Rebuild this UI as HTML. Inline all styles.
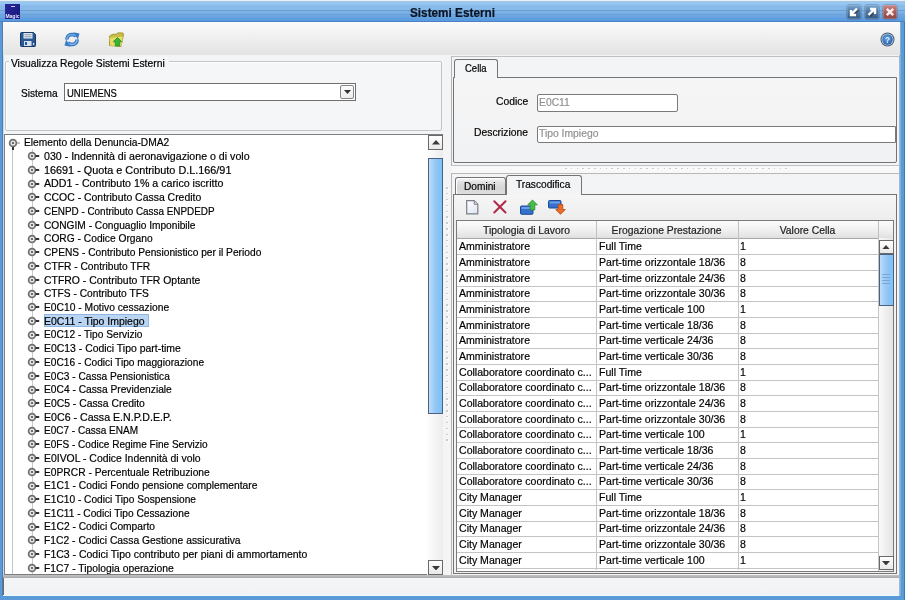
<!DOCTYPE html>
<html><head><meta charset="utf-8"><title>Sistemi Esterni</title><style>
*{box-sizing:border-box;margin:0;padding:0}
html,body{width:905px;height:600px;overflow:hidden;background:#5a9ad8}
body{position:relative;-webkit-text-stroke:0.2px;-webkit-font-smoothing:antialiased;will-change:transform;font-family:"Liberation Sans", sans-serif;font-size:11px;color:#000}
.a{position:absolute}
.t{position:absolute;white-space:nowrap;line-height:12px;transform:scaleX(.94);transform-origin:0 0}
.c{transform-origin:50% 0}
</style></head>
<body>
<div class="a" style="left:0;top:0;width:905px;height:22px;background:linear-gradient(#e2f2fb 0px,#e2f2fb 1px,#aac6de 1px,#aac6de 2px,#98c8f2 2px,#98c8f2 3px,#96c6f2 3px,#96c6f2 4px,#92c2f0 4px,#92c2f0 5px,#8ebff0 5px,#8ebff0 6px,#86b8e6 6px,#86b8e6 7px,#88bcea 7px,#88bcea 8px,#86bbea 8px,#86bbea 9px,#84b9e8 9px,#84b9e8 10px,#6f9fd0 10px,#6f9fd0 11px,#7cb2e6 11px,#7cb2e6 12px,#7ab0e6 12px,#7ab0e6 13px,#78aee4 13px,#78aee4 14px,#6ca0d6 14px,#6ca0d6 15px,#6ea8e2 15px,#6ea8e2 16px,#6aa5e1 16px,#6aa5e1 17px,#66a2e0 17px,#66a2e0 18px,#5e9de0 18px,#5e9de0 19px,#5c9ce0 19px,#5c9ce0 20px,#5a9adf 20px,#5a9adf 21px,#4a82c4 21px,#4a82c4 22px)"></div>
<div class="a" style="left:5px;top:4px;width:15px;height:15px;background:linear-gradient(135deg,#2a2a9a,#15157a)"></div>
<div class="a" style="left:11px;top:6px;width:4px;height:1px;background:#c8c8ff"></div>
<div class="a" style="left:5px;top:13.5px;width:15px;text-align:center;font-size:5px;line-height:5px;font-weight:bold;color:#e8e8ff;-webkit-text-stroke:0">Magic</div>
<div class="t c" style="left:0;width:905px;top:7px;text-align:center;font-weight:bold;font-size:12px;color:#0a1424;transform:scaleX(.98)">Sistemi Esterni</div>
<div class="a" style="left:847px;top:4.5px;width:14px;height:14px;border-radius:2px;background:linear-gradient(#7ba6cf,#4f7aa3 45%,#355c82);box-shadow:inset 0 0 0 1px rgba(255,255,255,.18),0 0 0 .5px rgba(40,70,110,.5)"><svg width="14" height="14" style="position:absolute;left:0;top:0"><path d="M10.5 4 L5 9.5" stroke="#223" stroke-width="2" opacity=".5" transform="translate(1,1)"/><path d="M10 3.5 L5 8.5 M4 5 V10 H9" stroke="#fff" stroke-width="2.4" fill="none"/></svg></div>
<div class="a" style="left:865px;top:4.5px;width:14px;height:14px;border-radius:2px;background:linear-gradient(#7ba6cf,#4f7aa3 45%,#355c82);box-shadow:inset 0 0 0 1px rgba(255,255,255,.18),0 0 0 .5px rgba(40,70,110,.5)"><svg width="14" height="14" style="position:absolute;left:0;top:0"><path d="M4 10.5 L9.5 5" stroke="#223" stroke-width="2" opacity=".5" transform="translate(1,1)"/><path d="M3.5 10 L8.5 5 M5 4 H10 V9" stroke="#fff" stroke-width="2.4" fill="none"/></svg></div>
<div class="a" style="left:883px;top:4.5px;width:14px;height:14px;border-radius:2px;background:linear-gradient(#c98a88,#a86060 45%,#8a4646);box-shadow:inset 0 0 0 1px rgba(255,255,255,.18),0 0 0 .5px rgba(40,70,110,.5)"><svg width="14" height="14" style="position:absolute;left:0;top:0"><path d="M3.8 3.8 L10.2 10.2 M10.2 3.8 L3.8 10.2" stroke="#fbeaea" stroke-width="2.4" fill="none"/></svg></div>
<div class="a" style="left:3px;top:22px;width:896px;height:573px;background:#f3f4f5"></div>
<div class="a" style="left:2px;top:22px;width:1px;height:574px;background:#4e7eae"></div>
<div class="a" style="left:3px;top:22px;width:1px;height:574px;background:#c4daee"></div>
<div class="a" style="left:899px;top:22px;width:2px;height:574px;background:linear-gradient(90deg,#a8c0d8,#78a8d8)"></div>
<div class="a" style="left:904px;top:22px;width:1px;height:578px;background:#3a78b0"></div>
<div class="a" style="left:3px;top:22px;width:897px;height:33px;background:linear-gradient(#fbfbfb,#f1f1f1 40%,#e3e3e3)"></div>
<svg class="a" style="left:20px;top:32px" width="16" height="15" viewBox="0 0 16 15">
<path d="M1.5 0.5 H13.5 L15.5 2.5 V13.5 Q15.5 14.5 14.5 14.5 H1.5 Q0.5 14.5 0.5 13.5 V1.5 Q0.5 0.5 1.5 0.5 Z" fill="#2a5894" stroke="#17396a"/>
<rect x="3.5" y="1" width="9" height="5.5" fill="#dfe6f0"/>
<rect x="4.5" y="2.2" width="7" height="1" fill="#8f9cb0"/>
<rect x="4.5" y="4.2" width="7" height="1" fill="#8f9cb0"/>
<rect x="4" y="9" width="7.5" height="5" fill="#d7e0ee"/>
<rect x="5" y="10" width="2" height="3" fill="#2a5894"/>
<rect x="13" y="11" width="1.2" height="2" fill="#d7e0ee"/>
</svg>
<svg class="a" style="left:64px;top:32px" width="16" height="15" viewBox="0 0 16 15">
<path d="M2.8 7.5 C2.8 3.8 6 2.2 9 2.6 C10.5 2.8 11.5 3.4 12.2 4.2" stroke="#2f6db8" stroke-width="3.6" fill="none"/>
<path d="M2.8 7.5 C2.8 3.8 6 2.2 9 2.6 C10.5 2.8 11.5 3.4 12.2 4.2" stroke="#6aaae8" stroke-width="1.6" fill="none"/>
<path d="M9.5 0.3 L15.5 1.5 L13.8 7.5 Z" fill="#3a7cc8"/>
<path d="M13.2 7.5 C13.2 11.2 10 12.8 7 12.4 C5.5 12.2 4.5 11.6 3.8 10.8" stroke="#2f6db8" stroke-width="3.6" fill="none"/>
<path d="M13.2 7.5 C13.2 11.2 10 12.8 7 12.4 C5.5 12.2 4.5 11.6 3.8 10.8" stroke="#7ab6ee" stroke-width="1.6" fill="none"/>
<path d="M6.5 14.7 L0.5 13.5 L2.2 7.5 Z" fill="#3a7cc8"/>
</svg>
<svg class="a" style="left:108px;top:32px" width="16" height="15" viewBox="0 0 16 15">
<path d="M1.5 4 L1.5 13.5 L13 14.5 L15.5 3 L15 1 L10 0.8 L8.5 2 L4 2.5 Z" fill="#c8bd48" stroke="#9a8e22" stroke-width=".8"/>
<path d="M1.5 6 L14.8 4.5 L13.5 14 L2.5 13.8 Z" fill="#e6dc68"/>
<path d="M9.5 5.5 L13.8 9.8 L11.7 9.8 L11.7 14 L7.3 14 L7.3 9.8 L5.2 9.8 Z" fill="#36b436" stroke="#1f8a1f" stroke-width=".7"/>
</svg>
<svg class="a" style="left:880px;top:31.5px" width="15" height="15" viewBox="0 0 15 15">
<defs><radialGradient id="hg" cx=".45" cy=".4" r=".6"><stop offset="0" stop-color="#6aa6e4"/><stop offset="1" stop-color="#2c64a8"/></radialGradient></defs>
<circle cx="7.5" cy="7.5" r="7" fill="#4a5c74"/>
<circle cx="7.5" cy="7.5" r="6" fill="#b8d0e8"/>
<circle cx="7.5" cy="7.5" r="5.2" fill="url(#hg)"/>
<text x="7.5" y="10.8" text-anchor="middle" font-family="Liberation Sans" font-weight="bold" font-size="8.5" fill="#d8ecff" style="-webkit-text-stroke:0">?</text>
</svg>
<div class="a" style="left:5px;top:61px;width:437px;height:70px;border:1px solid #c2c4c6;border-radius:2px;background:#f5f6f7;box-shadow:inset 1px 1px 0 #fff"></div>
<div class="t" style="left:9px;top:56.5px;padding:0 4px 0 2px;background:#f5f6f7;color:#000">Visualizza Regole Sistemi Esterni</div>
<div class="t" style="left:21px;top:86.5px;transform:scaleX(.92)">Sistema</div>
<div class="a" style="left:64px;top:83px;width:292px;height:18px;border:1px solid #6f6f6f;background:#fff"></div>
<div class="t" style="left:66.5px;top:86.5px;transform:scaleX(.86)">UNIEMENS</div>
<div class="a" style="left:340px;top:85px;width:14px;height:14px;border:1px solid #858585;border-radius:2px;background:linear-gradient(#fdfdfd,#ececec)"></div>
<svg class="a" style="left:343.5px;top:89.5px" width="7" height="4"><path d="M0 0 H7 L3.5 4 Z" fill="#333"/></svg>
<div class="a" style="left:4px;top:134px;width:439px;height:441px;border:1px solid #7d7d7d;border-right:none;background:#fff"></div>
<div class="a" style="left:12px;top:146px;width:1px;height:428px;background:#c0c6ca"></div>
<div class="a" style="left:12px;top:146px;width:2px;height:4px;background:#333"></div>
<div class="a" style="left:31.5px;top:149px;width:1px;height:425px;background:#c8cccf"></div>
<svg class="a" style="left:7.5px;top:137.6px" width="14" height="10" viewBox="0 0 14 10"><circle cx="5" cy="5" r="3.4" fill="#e6e6e6" stroke="#6e6e6e" stroke-width="1.7"/><circle cx="5" cy="5" r="1.1" fill="#505050"/><rect x="8.6" y="4.5" width="3.4" height="1" fill="#8a8a8a"/></svg>
<div class="t" style="left:24px;top:136.30px;transform:scaleX(0.9278)">Elemento della Denuncia-DMA2</div>
<svg class="a" style="left:27px;top:151.32px" width="14" height="10" viewBox="0 0 14 10"><circle cx="5" cy="5" r="3.4" fill="#e6e6e6" stroke="#6e6e6e" stroke-width="1.7"/><circle cx="5" cy="5" r="1.1" fill="#505050"/><rect x="8.6" y="4.1" width="3.6" height="1.8" fill="#1e1e1e"/></svg>
<div class="t" style="left:44px;top:150.02px;transform:scaleX(0.966)">030 - Indennità di aeronavigazione o di volo</div>
<svg class="a" style="left:27px;top:165.04px" width="14" height="10" viewBox="0 0 14 10"><circle cx="5" cy="5" r="3.4" fill="#e6e6e6" stroke="#6e6e6e" stroke-width="1.7"/><circle cx="5" cy="5" r="1.1" fill="#505050"/><rect x="8.6" y="4.1" width="3.6" height="1.8" fill="#1e1e1e"/></svg>
<div class="t" style="left:44px;top:163.74px;transform:scaleX(0.9854)">16691 - Quota e Contributo D.L.166/91</div>
<svg class="a" style="left:27px;top:178.76px" width="14" height="10" viewBox="0 0 14 10"><circle cx="5" cy="5" r="3.4" fill="#e6e6e6" stroke="#6e6e6e" stroke-width="1.7"/><circle cx="5" cy="5" r="1.1" fill="#505050"/><rect x="8.6" y="4.1" width="3.6" height="1.8" fill="#1e1e1e"/></svg>
<div class="t" style="left:44px;top:177.46px;transform:scaleX(0.9683)">ADD1 - Contributo 1% a carico iscritto</div>
<svg class="a" style="left:27px;top:192.48px" width="14" height="10" viewBox="0 0 14 10"><circle cx="5" cy="5" r="3.4" fill="#e6e6e6" stroke="#6e6e6e" stroke-width="1.7"/><circle cx="5" cy="5" r="1.1" fill="#505050"/><rect x="8.6" y="4.1" width="3.6" height="1.8" fill="#1e1e1e"/></svg>
<div class="t" style="left:44px;top:191.18px;transform:scaleX(0.9492)">CCOC - Contributo Cassa Credito</div>
<svg class="a" style="left:27px;top:206.2px" width="14" height="10" viewBox="0 0 14 10"><circle cx="5" cy="5" r="3.4" fill="#e6e6e6" stroke="#6e6e6e" stroke-width="1.7"/><circle cx="5" cy="5" r="1.1" fill="#505050"/><rect x="8.6" y="4.1" width="3.6" height="1.8" fill="#1e1e1e"/></svg>
<div class="t" style="left:44px;top:204.90px;transform:scaleX(0.9002)">CENPD - Contributo Cassa ENPDEDP</div>
<svg class="a" style="left:27px;top:219.92000000000002px" width="14" height="10" viewBox="0 0 14 10"><circle cx="5" cy="5" r="3.4" fill="#e6e6e6" stroke="#6e6e6e" stroke-width="1.7"/><circle cx="5" cy="5" r="1.1" fill="#505050"/><rect x="8.6" y="4.1" width="3.6" height="1.8" fill="#1e1e1e"/></svg>
<div class="t" style="left:44px;top:218.62px;transform:scaleX(0.9246)">CONGIM - Conguaglio Imponibile</div>
<svg class="a" style="left:27px;top:233.64px" width="14" height="10" viewBox="0 0 14 10"><circle cx="5" cy="5" r="3.4" fill="#e6e6e6" stroke="#6e6e6e" stroke-width="1.7"/><circle cx="5" cy="5" r="1.1" fill="#505050"/><rect x="8.6" y="4.1" width="3.6" height="1.8" fill="#1e1e1e"/></svg>
<div class="t" style="left:44px;top:232.34px;transform:scaleX(0.9304)">CORG - Codice Organo</div>
<svg class="a" style="left:27px;top:247.36px" width="14" height="10" viewBox="0 0 14 10"><circle cx="5" cy="5" r="3.4" fill="#e6e6e6" stroke="#6e6e6e" stroke-width="1.7"/><circle cx="5" cy="5" r="1.1" fill="#505050"/><rect x="8.6" y="4.1" width="3.6" height="1.8" fill="#1e1e1e"/></svg>
<div class="t" style="left:44px;top:246.06px;transform:scaleX(0.928)">CPENS - Contributo Pensionistico per il Periodo</div>
<svg class="a" style="left:27px;top:261.08px" width="14" height="10" viewBox="0 0 14 10"><circle cx="5" cy="5" r="3.4" fill="#e6e6e6" stroke="#6e6e6e" stroke-width="1.7"/><circle cx="5" cy="5" r="1.1" fill="#505050"/><rect x="8.6" y="4.1" width="3.6" height="1.8" fill="#1e1e1e"/></svg>
<div class="t" style="left:44px;top:259.78px;transform:scaleX(0.9311)">CTFR - Contributo TFR</div>
<svg class="a" style="left:27px;top:274.8px" width="14" height="10" viewBox="0 0 14 10"><circle cx="5" cy="5" r="3.4" fill="#e6e6e6" stroke="#6e6e6e" stroke-width="1.7"/><circle cx="5" cy="5" r="1.1" fill="#505050"/><rect x="8.6" y="4.1" width="3.6" height="1.8" fill="#1e1e1e"/></svg>
<div class="t" style="left:44px;top:273.50px;transform:scaleX(0.9485)">CTFRO - Contributo TFR Optante</div>
<svg class="a" style="left:27px;top:288.52px" width="14" height="10" viewBox="0 0 14 10"><circle cx="5" cy="5" r="3.4" fill="#e6e6e6" stroke="#6e6e6e" stroke-width="1.7"/><circle cx="5" cy="5" r="1.1" fill="#505050"/><rect x="8.6" y="4.1" width="3.6" height="1.8" fill="#1e1e1e"/></svg>
<div class="t" style="left:44px;top:287.22px;transform:scaleX(0.9275)">CTFS - Contributo TFS</div>
<svg class="a" style="left:27px;top:302.24px" width="14" height="10" viewBox="0 0 14 10"><circle cx="5" cy="5" r="3.4" fill="#e6e6e6" stroke="#6e6e6e" stroke-width="1.7"/><circle cx="5" cy="5" r="1.1" fill="#505050"/><rect x="8.6" y="4.1" width="3.6" height="1.8" fill="#1e1e1e"/></svg>
<div class="t" style="left:44px;top:300.94px;transform:scaleX(0.9347)">E0C10 - Motivo cessazione</div>
<svg class="a" style="left:27px;top:315.96000000000004px" width="14" height="10" viewBox="0 0 14 10"><circle cx="5" cy="5" r="3.4" fill="#e6e6e6" stroke="#6e6e6e" stroke-width="1.7"/><circle cx="5" cy="5" r="1.1" fill="#505050"/><rect x="8.6" y="4.1" width="3.6" height="1.8" fill="#1e1e1e"/></svg>
<div class="a" style="left:43.5px;top:313.76px;width:105px;height:13px;background:#b9d5f3;border:1px solid #8fb6e3"></div>
<div class="t" style="left:44px;top:314.66px;transform:scaleX(0.9525)">E0C11 - Tipo Impiego</div>
<svg class="a" style="left:27px;top:329.68px" width="14" height="10" viewBox="0 0 14 10"><circle cx="5" cy="5" r="3.4" fill="#e6e6e6" stroke="#6e6e6e" stroke-width="1.7"/><circle cx="5" cy="5" r="1.1" fill="#505050"/><rect x="8.6" y="4.1" width="3.6" height="1.8" fill="#1e1e1e"/></svg>
<div class="t" style="left:44px;top:328.38px;transform:scaleX(0.9258)">E0C12 - Tipo Servizio</div>
<svg class="a" style="left:27px;top:343.4px" width="14" height="10" viewBox="0 0 14 10"><circle cx="5" cy="5" r="3.4" fill="#e6e6e6" stroke="#6e6e6e" stroke-width="1.7"/><circle cx="5" cy="5" r="1.1" fill="#505050"/><rect x="8.6" y="4.1" width="3.6" height="1.8" fill="#1e1e1e"/></svg>
<div class="t" style="left:44px;top:342.10px;transform:scaleX(0.9484)">E0C13 - Codici Tipo part-time</div>
<svg class="a" style="left:27px;top:357.12px" width="14" height="10" viewBox="0 0 14 10"><circle cx="5" cy="5" r="3.4" fill="#e6e6e6" stroke="#6e6e6e" stroke-width="1.7"/><circle cx="5" cy="5" r="1.1" fill="#505050"/><rect x="8.6" y="4.1" width="3.6" height="1.8" fill="#1e1e1e"/></svg>
<div class="t" style="left:44px;top:355.82px;transform:scaleX(0.9249)">E0C16 - Codici Tipo maggiorazione</div>
<svg class="a" style="left:27px;top:370.84000000000003px" width="14" height="10" viewBox="0 0 14 10"><circle cx="5" cy="5" r="3.4" fill="#e6e6e6" stroke="#6e6e6e" stroke-width="1.7"/><circle cx="5" cy="5" r="1.1" fill="#505050"/><rect x="8.6" y="4.1" width="3.6" height="1.8" fill="#1e1e1e"/></svg>
<div class="t" style="left:44px;top:369.54px;transform:scaleX(0.923)">E0C3 - Cassa Pensionistica</div>
<svg class="a" style="left:27px;top:384.56px" width="14" height="10" viewBox="0 0 14 10"><circle cx="5" cy="5" r="3.4" fill="#e6e6e6" stroke="#6e6e6e" stroke-width="1.7"/><circle cx="5" cy="5" r="1.1" fill="#505050"/><rect x="8.6" y="4.1" width="3.6" height="1.8" fill="#1e1e1e"/></svg>
<div class="t" style="left:44px;top:383.26px;transform:scaleX(0.929)">E0C4 - Cassa Previdenziale</div>
<svg class="a" style="left:27px;top:398.28px" width="14" height="10" viewBox="0 0 14 10"><circle cx="5" cy="5" r="3.4" fill="#e6e6e6" stroke="#6e6e6e" stroke-width="1.7"/><circle cx="5" cy="5" r="1.1" fill="#505050"/><rect x="8.6" y="4.1" width="3.6" height="1.8" fill="#1e1e1e"/></svg>
<div class="t" style="left:44px;top:396.98px;transform:scaleX(0.9428)">E0C5 - Cassa Credito</div>
<svg class="a" style="left:27px;top:412.0px" width="14" height="10" viewBox="0 0 14 10"><circle cx="5" cy="5" r="3.4" fill="#e6e6e6" stroke="#6e6e6e" stroke-width="1.7"/><circle cx="5" cy="5" r="1.1" fill="#505050"/><rect x="8.6" y="4.1" width="3.6" height="1.8" fill="#1e1e1e"/></svg>
<div class="t" style="left:44px;top:410.70px;transform:scaleX(0.9647)">E0C6 - Cassa E.N.P.D.E.P.</div>
<svg class="a" style="left:27px;top:425.72px" width="14" height="10" viewBox="0 0 14 10"><circle cx="5" cy="5" r="3.4" fill="#e6e6e6" stroke="#6e6e6e" stroke-width="1.7"/><circle cx="5" cy="5" r="1.1" fill="#505050"/><rect x="8.6" y="4.1" width="3.6" height="1.8" fill="#1e1e1e"/></svg>
<div class="t" style="left:44px;top:424.42px;transform:scaleX(0.9103)">E0C7 - Cassa ENAM</div>
<svg class="a" style="left:27px;top:439.44000000000005px" width="14" height="10" viewBox="0 0 14 10"><circle cx="5" cy="5" r="3.4" fill="#e6e6e6" stroke="#6e6e6e" stroke-width="1.7"/><circle cx="5" cy="5" r="1.1" fill="#505050"/><rect x="8.6" y="4.1" width="3.6" height="1.8" fill="#1e1e1e"/></svg>
<div class="t" style="left:44px;top:438.14px;transform:scaleX(0.9135)">E0FS - Codice Regime Fine Servizio</div>
<svg class="a" style="left:27px;top:453.15999999999997px" width="14" height="10" viewBox="0 0 14 10"><circle cx="5" cy="5" r="3.4" fill="#e6e6e6" stroke="#6e6e6e" stroke-width="1.7"/><circle cx="5" cy="5" r="1.1" fill="#505050"/><rect x="8.6" y="4.1" width="3.6" height="1.8" fill="#1e1e1e"/></svg>
<div class="t" style="left:44px;top:451.86px;transform:scaleX(0.9473)">E0IVOL - Codice Indennità di volo</div>
<svg class="a" style="left:27px;top:466.88px" width="14" height="10" viewBox="0 0 14 10"><circle cx="5" cy="5" r="3.4" fill="#e6e6e6" stroke="#6e6e6e" stroke-width="1.7"/><circle cx="5" cy="5" r="1.1" fill="#505050"/><rect x="8.6" y="4.1" width="3.6" height="1.8" fill="#1e1e1e"/></svg>
<div class="t" style="left:44px;top:465.58px;transform:scaleX(0.9315)">E0PRCR - Percentuale Retribuzione</div>
<svg class="a" style="left:27px;top:480.6px" width="14" height="10" viewBox="0 0 14 10"><circle cx="5" cy="5" r="3.4" fill="#e6e6e6" stroke="#6e6e6e" stroke-width="1.7"/><circle cx="5" cy="5" r="1.1" fill="#505050"/><rect x="8.6" y="4.1" width="3.6" height="1.8" fill="#1e1e1e"/></svg>
<div class="t" style="left:44px;top:479.30px;transform:scaleX(0.9334)">E1C1 - Codici Fondo pensione complementare</div>
<svg class="a" style="left:27px;top:494.32000000000005px" width="14" height="10" viewBox="0 0 14 10"><circle cx="5" cy="5" r="3.4" fill="#e6e6e6" stroke="#6e6e6e" stroke-width="1.7"/><circle cx="5" cy="5" r="1.1" fill="#505050"/><rect x="8.6" y="4.1" width="3.6" height="1.8" fill="#1e1e1e"/></svg>
<div class="t" style="left:44px;top:493.02px;transform:scaleX(0.924)">E1C10 - Codici Tipo Sospensione</div>
<svg class="a" style="left:27px;top:508.03999999999996px" width="14" height="10" viewBox="0 0 14 10"><circle cx="5" cy="5" r="3.4" fill="#e6e6e6" stroke="#6e6e6e" stroke-width="1.7"/><circle cx="5" cy="5" r="1.1" fill="#505050"/><rect x="8.6" y="4.1" width="3.6" height="1.8" fill="#1e1e1e"/></svg>
<div class="t" style="left:44px;top:506.74px;transform:scaleX(0.924)">E1C11 - Codici Tipo Cessazione</div>
<svg class="a" style="left:27px;top:521.76px" width="14" height="10" viewBox="0 0 14 10"><circle cx="5" cy="5" r="3.4" fill="#e6e6e6" stroke="#6e6e6e" stroke-width="1.7"/><circle cx="5" cy="5" r="1.1" fill="#505050"/><rect x="8.6" y="4.1" width="3.6" height="1.8" fill="#1e1e1e"/></svg>
<div class="t" style="left:44px;top:520.46px;transform:scaleX(0.9307)">E1C2 - Codici Comparto</div>
<svg class="a" style="left:27px;top:535.48px" width="14" height="10" viewBox="0 0 14 10"><circle cx="5" cy="5" r="3.4" fill="#e6e6e6" stroke="#6e6e6e" stroke-width="1.7"/><circle cx="5" cy="5" r="1.1" fill="#505050"/><rect x="8.6" y="4.1" width="3.6" height="1.8" fill="#1e1e1e"/></svg>
<div class="t" style="left:44px;top:534.18px;transform:scaleX(0.9376)">F1C2 - Codici Cassa Gestione assicurativa</div>
<svg class="a" style="left:27px;top:549.2px" width="14" height="10" viewBox="0 0 14 10"><circle cx="5" cy="5" r="3.4" fill="#e6e6e6" stroke="#6e6e6e" stroke-width="1.7"/><circle cx="5" cy="5" r="1.1" fill="#505050"/><rect x="8.6" y="4.1" width="3.6" height="1.8" fill="#1e1e1e"/></svg>
<div class="t" style="left:44px;top:547.90px;transform:scaleX(0.9528)">F1C3 - Codici Tipo contributo per piani di ammortamento</div>
<svg class="a" style="left:27px;top:562.92px" width="14" height="10" viewBox="0 0 14 10"><circle cx="5" cy="5" r="3.4" fill="#e6e6e6" stroke="#6e6e6e" stroke-width="1.7"/><circle cx="5" cy="5" r="1.1" fill="#505050"/><rect x="8.6" y="4.1" width="3.6" height="1.8" fill="#1e1e1e"/></svg>
<div class="t" style="left:44px;top:561.62px;transform:scaleX(0.9393)">F1C7 - Tipologia operazione</div>
<div class="a" style="left:427px;top:135px;width:16px;height:440px;background:linear-gradient(90deg,#fdfdfd,#ececec)"></div>
<div class="a" style="left:428px;top:135px;width:15px;height:15px;border:1px solid #6a6a6a;background:linear-gradient(#fff,#e8e8e8)"></div>
<svg class="a" style="left:431.5px;top:140px" width="8" height="4.5"><path d="M0 4.5 H8 L4 0 Z" fill="#3a3a3a"/></svg>
<div class="a" style="left:427.5px;top:158px;width:15.5px;height:256px;border:1px solid #4d617e;background:linear-gradient(90deg,#bcdefb,#98c8f5 45%,#86c2f6 75%,#7cc4fa)"></div>
<div class="a" style="left:428px;top:560px;width:15px;height:15px;border:1px solid #6a6a6a;background:linear-gradient(#fff,#e8e8e8)"></div>
<svg class="a" style="left:431.5px;top:565.5px" width="8" height="4.5"><path d="M0 0 H8 L4 4.5 Z" fill="#3a3a3a"/></svg>
<div class="a" style="left:3px;top:574.5px;width:896px;height:3.3px;background:linear-gradient(#c4c4c4,#a8a8a8)"></div>
<div class="a" style="left:446px;top:187.0px;width:1.6px;height:1.6px;background:#c8ccd0;box-shadow:1px 1px 0 #fff"></div>
<div class="a" style="left:446px;top:192.9px;width:1.6px;height:1.6px;background:#c8ccd0;box-shadow:1px 1px 0 #fff"></div>
<div class="a" style="left:446px;top:198.7px;width:1.6px;height:1.6px;background:#c8ccd0;box-shadow:1px 1px 0 #fff"></div>
<div class="a" style="left:446px;top:204.6px;width:1.6px;height:1.6px;background:#c8ccd0;box-shadow:1px 1px 0 #fff"></div>
<div class="a" style="left:446px;top:210.5px;width:1.6px;height:1.6px;background:#c8ccd0;box-shadow:1px 1px 0 #fff"></div>
<div class="a" style="left:446px;top:216.3px;width:1.6px;height:1.6px;background:#c8ccd0;box-shadow:1px 1px 0 #fff"></div>
<div class="a" style="left:446px;top:222.2px;width:1.6px;height:1.6px;background:#c8ccd0;box-shadow:1px 1px 0 #fff"></div>
<div class="a" style="left:446px;top:228.1px;width:1.6px;height:1.6px;background:#c8ccd0;box-shadow:1px 1px 0 #fff"></div>
<div class="a" style="left:446px;top:234.0px;width:1.6px;height:1.6px;background:#c8ccd0;box-shadow:1px 1px 0 #fff"></div>
<div class="a" style="left:446px;top:239.8px;width:1.6px;height:1.6px;background:#c8ccd0;box-shadow:1px 1px 0 #fff"></div>
<div class="a" style="left:446px;top:245.7px;width:1.6px;height:1.6px;background:#c8ccd0;box-shadow:1px 1px 0 #fff"></div>
<div class="a" style="left:446px;top:251.6px;width:1.6px;height:1.6px;background:#c8ccd0;box-shadow:1px 1px 0 #fff"></div>
<div class="a" style="left:446px;top:257.4px;width:1.6px;height:1.6px;background:#c8ccd0;box-shadow:1px 1px 0 #fff"></div>
<div class="a" style="left:446px;top:263.3px;width:1.6px;height:1.6px;background:#c8ccd0;box-shadow:1px 1px 0 #fff"></div>
<div class="a" style="left:446px;top:269.2px;width:1.6px;height:1.6px;background:#c8ccd0;box-shadow:1px 1px 0 #fff"></div>
<div class="a" style="left:446px;top:275.1px;width:1.6px;height:1.6px;background:#c8ccd0;box-shadow:1px 1px 0 #fff"></div>
<div class="a" style="left:446px;top:280.9px;width:1.6px;height:1.6px;background:#c8ccd0;box-shadow:1px 1px 0 #fff"></div>
<div class="a" style="left:446px;top:286.8px;width:1.6px;height:1.6px;background:#c8ccd0;box-shadow:1px 1px 0 #fff"></div>
<div class="a" style="left:446px;top:292.7px;width:1.6px;height:1.6px;background:#c8ccd0;box-shadow:1px 1px 0 #fff"></div>
<div class="a" style="left:446px;top:298.5px;width:1.6px;height:1.6px;background:#c8ccd0;box-shadow:1px 1px 0 #fff"></div>
<div class="a" style="left:446px;top:304.4px;width:1.6px;height:1.6px;background:#c8ccd0;box-shadow:1px 1px 0 #fff"></div>
<div class="a" style="left:446px;top:310.3px;width:1.6px;height:1.6px;background:#c8ccd0;box-shadow:1px 1px 0 #fff"></div>
<div class="a" style="left:446px;top:316.1px;width:1.6px;height:1.6px;background:#c8ccd0;box-shadow:1px 1px 0 #fff"></div>
<div class="a" style="left:446px;top:322.0px;width:1.6px;height:1.6px;background:#c8ccd0;box-shadow:1px 1px 0 #fff"></div>
<div class="a" style="left:446px;top:327.9px;width:1.6px;height:1.6px;background:#c8ccd0;box-shadow:1px 1px 0 #fff"></div>
<div class="a" style="left:446px;top:333.8px;width:1.6px;height:1.6px;background:#c8ccd0;box-shadow:1px 1px 0 #fff"></div>
<div class="a" style="left:446px;top:339.6px;width:1.6px;height:1.6px;background:#c8ccd0;box-shadow:1px 1px 0 #fff"></div>
<div class="a" style="left:446px;top:345.5px;width:1.6px;height:1.6px;background:#c8ccd0;box-shadow:1px 1px 0 #fff"></div>
<div class="a" style="left:446px;top:351.4px;width:1.6px;height:1.6px;background:#c8ccd0;box-shadow:1px 1px 0 #fff"></div>
<div class="a" style="left:446px;top:357.2px;width:1.6px;height:1.6px;background:#c8ccd0;box-shadow:1px 1px 0 #fff"></div>
<div class="a" style="left:446px;top:363.1px;width:1.6px;height:1.6px;background:#c8ccd0;box-shadow:1px 1px 0 #fff"></div>
<div class="a" style="left:446px;top:369.0px;width:1.6px;height:1.6px;background:#c8ccd0;box-shadow:1px 1px 0 #fff"></div>
<div class="a" style="left:446px;top:374.8px;width:1.6px;height:1.6px;background:#c8ccd0;box-shadow:1px 1px 0 #fff"></div>
<div class="a" style="left:446px;top:380.7px;width:1.6px;height:1.6px;background:#c8ccd0;box-shadow:1px 1px 0 #fff"></div>
<div class="a" style="left:446px;top:386.6px;width:1.6px;height:1.6px;background:#c8ccd0;box-shadow:1px 1px 0 #fff"></div>
<div class="a" style="left:446px;top:392.5px;width:1.6px;height:1.6px;background:#c8ccd0;box-shadow:1px 1px 0 #fff"></div>
<div class="a" style="left:446px;top:398.3px;width:1.6px;height:1.6px;background:#c8ccd0;box-shadow:1px 1px 0 #fff"></div>
<div class="a" style="left:446px;top:404.2px;width:1.6px;height:1.6px;background:#c8ccd0;box-shadow:1px 1px 0 #fff"></div>
<div class="a" style="left:446px;top:410.1px;width:1.6px;height:1.6px;background:#c8ccd0;box-shadow:1px 1px 0 #fff"></div>
<div class="a" style="left:446px;top:415.9px;width:1.6px;height:1.6px;background:#c8ccd0;box-shadow:1px 1px 0 #fff"></div>
<div class="a" style="left:446px;top:421.8px;width:1.6px;height:1.6px;background:#c8ccd0;box-shadow:1px 1px 0 #fff"></div>
<div class="a" style="left:446px;top:427.7px;width:1.6px;height:1.6px;background:#c8ccd0;box-shadow:1px 1px 0 #fff"></div>
<div class="a" style="left:446px;top:433.5px;width:1.6px;height:1.6px;background:#c8ccd0;box-shadow:1px 1px 0 #fff"></div>
<div class="a" style="left:446px;top:439.4px;width:1.6px;height:1.6px;background:#c8ccd0;box-shadow:1px 1px 0 #fff"></div>
<div class="a" style="left:451px;top:56px;width:448px;height:110px;border-left:1px solid #b4b4b4;border-top:1px solid #c0c0c0;border-bottom:1px solid #c0c0c0"></div>
<div class="a" style="left:453px;top:76.5px;width:444px;height:86px;border:1px solid #747474;border-radius:0 0 2px 2px;background:linear-gradient(#f6f6f7,#f0f1f2)"></div>
<div class="a" style="left:454px;top:58.5px;width:44px;height:19px;border:1px solid #747474;border-bottom:none;border-radius:3px 3px 0 0;background:#f4f5f7"></div>
<div class="t" style="left:465px;top:62.3px;font-size:10.8px;transform:scaleX(.88)">Cella</div>
<div class="t" style="left:496px;top:95px">Codice</div>
<div class="a" style="left:536.5px;top:94px;width:141px;height:17.5px;border:1px solid #7a7a7a;border-radius:2px;background:#fff"></div>
<div class="t" style="left:539px;top:96px;color:#909090">E0C11</div>
<div class="t" style="left:474px;top:126px">Descrizione</div>
<div class="a" style="left:536.5px;top:125.5px;width:359px;height:17px;border:1px solid #7a7a7a;border-radius:2px 0 0 2px;background:#fff"></div>
<div class="t" style="left:539px;top:127px;color:#909090">Tipo Impiego</div>
<div class="a" style="left:452px;top:165.5px;width:447px;height:7px;background:#f8f8f8"></div>
<div class="a" style="left:565.0px;top:167.5px;width:1.6px;height:1.6px;background:#c8ccd0;box-shadow:1px 1px 0 #fff"></div>
<div class="a" style="left:570.8px;top:167.5px;width:1.6px;height:1.6px;background:#c8ccd0;box-shadow:1px 1px 0 #fff"></div>
<div class="a" style="left:576.6px;top:167.5px;width:1.6px;height:1.6px;background:#c8ccd0;box-shadow:1px 1px 0 #fff"></div>
<div class="a" style="left:582.4px;top:167.5px;width:1.6px;height:1.6px;background:#c8ccd0;box-shadow:1px 1px 0 #fff"></div>
<div class="a" style="left:588.2px;top:167.5px;width:1.6px;height:1.6px;background:#c8ccd0;box-shadow:1px 1px 0 #fff"></div>
<div class="a" style="left:594.0px;top:167.5px;width:1.6px;height:1.6px;background:#c8ccd0;box-shadow:1px 1px 0 #fff"></div>
<div class="a" style="left:599.8px;top:167.5px;width:1.6px;height:1.6px;background:#c8ccd0;box-shadow:1px 1px 0 #fff"></div>
<div class="a" style="left:605.6px;top:167.5px;width:1.6px;height:1.6px;background:#c8ccd0;box-shadow:1px 1px 0 #fff"></div>
<div class="a" style="left:611.4px;top:167.5px;width:1.6px;height:1.6px;background:#c8ccd0;box-shadow:1px 1px 0 #fff"></div>
<div class="a" style="left:617.2px;top:167.5px;width:1.6px;height:1.6px;background:#c8ccd0;box-shadow:1px 1px 0 #fff"></div>
<div class="a" style="left:623.0px;top:167.5px;width:1.6px;height:1.6px;background:#c8ccd0;box-shadow:1px 1px 0 #fff"></div>
<div class="a" style="left:628.8px;top:167.5px;width:1.6px;height:1.6px;background:#c8ccd0;box-shadow:1px 1px 0 #fff"></div>
<div class="a" style="left:634.6px;top:167.5px;width:1.6px;height:1.6px;background:#c8ccd0;box-shadow:1px 1px 0 #fff"></div>
<div class="a" style="left:640.4px;top:167.5px;width:1.6px;height:1.6px;background:#c8ccd0;box-shadow:1px 1px 0 #fff"></div>
<div class="a" style="left:646.2px;top:167.5px;width:1.6px;height:1.6px;background:#c8ccd0;box-shadow:1px 1px 0 #fff"></div>
<div class="a" style="left:652.0px;top:167.5px;width:1.6px;height:1.6px;background:#c8ccd0;box-shadow:1px 1px 0 #fff"></div>
<div class="a" style="left:657.8px;top:167.5px;width:1.6px;height:1.6px;background:#c8ccd0;box-shadow:1px 1px 0 #fff"></div>
<div class="a" style="left:663.6px;top:167.5px;width:1.6px;height:1.6px;background:#c8ccd0;box-shadow:1px 1px 0 #fff"></div>
<div class="a" style="left:669.4px;top:167.5px;width:1.6px;height:1.6px;background:#c8ccd0;box-shadow:1px 1px 0 #fff"></div>
<div class="a" style="left:675.2px;top:167.5px;width:1.6px;height:1.6px;background:#c8ccd0;box-shadow:1px 1px 0 #fff"></div>
<div class="a" style="left:681.0px;top:167.5px;width:1.6px;height:1.6px;background:#c8ccd0;box-shadow:1px 1px 0 #fff"></div>
<div class="a" style="left:686.8px;top:167.5px;width:1.6px;height:1.6px;background:#c8ccd0;box-shadow:1px 1px 0 #fff"></div>
<div class="a" style="left:692.6px;top:167.5px;width:1.6px;height:1.6px;background:#c8ccd0;box-shadow:1px 1px 0 #fff"></div>
<div class="a" style="left:698.4px;top:167.5px;width:1.6px;height:1.6px;background:#c8ccd0;box-shadow:1px 1px 0 #fff"></div>
<div class="a" style="left:704.2px;top:167.5px;width:1.6px;height:1.6px;background:#c8ccd0;box-shadow:1px 1px 0 #fff"></div>
<div class="a" style="left:710.0px;top:167.5px;width:1.6px;height:1.6px;background:#c8ccd0;box-shadow:1px 1px 0 #fff"></div>
<div class="a" style="left:715.8px;top:167.5px;width:1.6px;height:1.6px;background:#c8ccd0;box-shadow:1px 1px 0 #fff"></div>
<div class="a" style="left:721.6px;top:167.5px;width:1.6px;height:1.6px;background:#c8ccd0;box-shadow:1px 1px 0 #fff"></div>
<div class="a" style="left:727.4px;top:167.5px;width:1.6px;height:1.6px;background:#c8ccd0;box-shadow:1px 1px 0 #fff"></div>
<div class="a" style="left:733.2px;top:167.5px;width:1.6px;height:1.6px;background:#c8ccd0;box-shadow:1px 1px 0 #fff"></div>
<div class="a" style="left:739.0px;top:167.5px;width:1.6px;height:1.6px;background:#c8ccd0;box-shadow:1px 1px 0 #fff"></div>
<div class="a" style="left:744.8px;top:167.5px;width:1.6px;height:1.6px;background:#c8ccd0;box-shadow:1px 1px 0 #fff"></div>
<div class="a" style="left:750.6px;top:167.5px;width:1.6px;height:1.6px;background:#c8ccd0;box-shadow:1px 1px 0 #fff"></div>
<div class="a" style="left:756.4px;top:167.5px;width:1.6px;height:1.6px;background:#c8ccd0;box-shadow:1px 1px 0 #fff"></div>
<div class="a" style="left:762.2px;top:167.5px;width:1.6px;height:1.6px;background:#c8ccd0;box-shadow:1px 1px 0 #fff"></div>
<div class="a" style="left:768.0px;top:167.5px;width:1.6px;height:1.6px;background:#c8ccd0;box-shadow:1px 1px 0 #fff"></div>
<div class="a" style="left:773.8px;top:167.5px;width:1.6px;height:1.6px;background:#c8ccd0;box-shadow:1px 1px 0 #fff"></div>
<div class="a" style="left:779.6px;top:167.5px;width:1.6px;height:1.6px;background:#c8ccd0;box-shadow:1px 1px 0 #fff"></div>
<div class="a" style="left:785.4px;top:167.5px;width:1.6px;height:1.6px;background:#c8ccd0;box-shadow:1px 1px 0 #fff"></div>
<div class="a" style="left:451px;top:172.5px;width:448px;height:402px;border-left:1px solid #b4b4b4;border-top:1px solid #b8b8b8"></div>
<div class="a" style="left:453px;top:193.5px;width:444px;height:380px;border:1px solid #747474;background:linear-gradient(#f6f6f7,#ececed 28px,#f2f2f3 40px)"></div>
<div class="a" style="left:454.5px;top:176.5px;width:51px;height:17px;border:1px solid #747474;border-bottom:none;border-radius:3px 3px 0 0;background:linear-gradient(#fafafa,#e2e2e2 25%,#d6d6d6 60%,#dedede);box-shadow:inset 1px 1px 0 #fff"></div>
<div class="t" style="left:464px;top:180px;font-size:10.8px">Domini</div>
<div class="a" style="left:506px;top:175px;width:76px;height:20px;border:1px solid #747474;border-bottom:none;border-radius:3px 3px 0 0;background:#f3f4f6"></div>
<div class="t" style="left:516px;top:178px;font-size:10.8px">Trascodifica</div>
<svg class="a" style="left:466px;top:200px" width="13" height="15" viewBox="0 0 13 15">
<defs><linearGradient id="dg" x1="0" y1="0" x2="1" y2="1"><stop offset="0" stop-color="#ffffff"/><stop offset="1" stop-color="#dde4f0"/></linearGradient></defs>
<path d="M0.7 0.7 H8.2 L11.8 4.3 V13.8 H0.7 Z" fill="url(#dg)" stroke="#7a7e88" stroke-width="1.2"/>
<path d="M8.2 0.7 V4.3 H11.8" fill="#c8d0dc" stroke="#7a7e88" stroke-width=".9"/>
</svg>
<svg class="a" style="left:493px;top:200px" width="14" height="14" viewBox="0 0 14 14">
<path d="M1.3 1.3 L12.5 12.5 M12.5 1.3 L1.3 12.5" stroke="#b02a48" stroke-width="2" stroke-linecap="round"/>
</svg>
<svg class="a" style="left:520px;top:199px" width="18" height="16" viewBox="0 0 18 16">
<rect x="0.5" y="7" width="12.5" height="8.3" rx="1" fill="#3570cc" stroke="#1d4a98"/>
<rect x="1.5" y="8" width="10.5" height="2" fill="#6a9ee6"/>
<path d="M12.5 1 L17.3 5.8 L14.8 5.8 L14.8 11 L10.2 11 L10.2 5.8 L7.7 5.8 Z" fill="#48bc48" stroke="#2a8a2a" stroke-width=".8"/>
</svg>
<svg class="a" style="left:548px;top:200px" width="19" height="15" viewBox="0 0 19 15">
<rect x="0.5" y="0.5" width="12.5" height="7.5" rx="1" fill="#3570cc" stroke="#1d4a98"/>
<rect x="1.5" y="1.5" width="10.5" height="2" fill="#6a9ee6"/>
<path d="M12.5 14.3 L17.3 9.5 L14.8 9.5 L14.8 4.5 L10.2 4.5 L10.2 9.5 L7.7 9.5 Z" fill="#ee6a2a" stroke="#b84a10" stroke-width=".8"/>
</svg>
<div class="a" style="left:456px;top:220px;width:438px;height:352px;border:1px solid #7a7a7a;background:#fff"></div>
<div class="a" style="left:457px;top:221px;width:436px;height:18px;background:linear-gradient(#fdfdfd,#eeeeee 60%,#e0e0e0);border-bottom:1px solid #a8a8a8"></div>
<div class="a" style="left:596.3px;top:221px;width:1px;height:17px;background:#c0c0c0"></div>
<div class="a" style="left:737.6px;top:221px;width:1px;height:17px;background:#c0c0c0"></div>
<div class="a" style="left:878.0px;top:221px;width:1px;height:17px;background:#c0c0c0"></div>
<div class="t c" style="left:457px;width:139px;top:224px;text-align:center;color:#202020">Tipologia di Lavoro</div>
<div class="t c" style="left:596px;width:141px;top:224px;text-align:center;color:#202020">Erogazione Prestazione</div>
<div class="t c" style="left:737px;width:141px;top:224px;text-align:center;color:#202020">Valore Cella</div>
<div class="a" style="left:457px;top:254.30px;width:421px;height:1px;background:#c4c4c4"></div>
<div class="t" style="left:459px;top:240.30px;transform:scaleX(.96)">Amministratore</div>
<div class="t" style="left:599px;top:240.30px;transform:scaleX(.96)">Full Time</div>
<div class="t" style="left:740px;top:240.30px;transform:scaleX(.96)">1</div>
<div class="a" style="left:457px;top:269.97px;width:421px;height:1px;background:#c4c4c4"></div>
<div class="t" style="left:459px;top:255.97px;transform:scaleX(.96)">Amministratore</div>
<div class="t" style="left:599px;top:255.97px;transform:scaleX(.96)">Part-time orizzontale 18/36</div>
<div class="t" style="left:740px;top:255.97px;transform:scaleX(.96)">8</div>
<div class="a" style="left:457px;top:285.64px;width:421px;height:1px;background:#c4c4c4"></div>
<div class="t" style="left:459px;top:271.64px;transform:scaleX(.96)">Amministratore</div>
<div class="t" style="left:599px;top:271.64px;transform:scaleX(.96)">Part-time orizzontale 24/36</div>
<div class="t" style="left:740px;top:271.64px;transform:scaleX(.96)">8</div>
<div class="a" style="left:457px;top:301.31px;width:421px;height:1px;background:#c4c4c4"></div>
<div class="t" style="left:459px;top:287.31px;transform:scaleX(.96)">Amministratore</div>
<div class="t" style="left:599px;top:287.31px;transform:scaleX(.96)">Part-time orizzontale 30/36</div>
<div class="t" style="left:740px;top:287.31px;transform:scaleX(.96)">8</div>
<div class="a" style="left:457px;top:316.98px;width:421px;height:1px;background:#c4c4c4"></div>
<div class="t" style="left:459px;top:302.98px;transform:scaleX(.96)">Amministratore</div>
<div class="t" style="left:599px;top:302.98px;transform:scaleX(.96)">Part-time verticale 100</div>
<div class="t" style="left:740px;top:302.98px;transform:scaleX(.96)">1</div>
<div class="a" style="left:457px;top:332.65px;width:421px;height:1px;background:#c4c4c4"></div>
<div class="t" style="left:459px;top:318.65px;transform:scaleX(.96)">Amministratore</div>
<div class="t" style="left:599px;top:318.65px;transform:scaleX(.96)">Part-time verticale 18/36</div>
<div class="t" style="left:740px;top:318.65px;transform:scaleX(.96)">8</div>
<div class="a" style="left:457px;top:348.32px;width:421px;height:1px;background:#c4c4c4"></div>
<div class="t" style="left:459px;top:334.32px;transform:scaleX(.96)">Amministratore</div>
<div class="t" style="left:599px;top:334.32px;transform:scaleX(.96)">Part-time verticale 24/36</div>
<div class="t" style="left:740px;top:334.32px;transform:scaleX(.96)">8</div>
<div class="a" style="left:457px;top:363.99px;width:421px;height:1px;background:#c4c4c4"></div>
<div class="t" style="left:459px;top:349.99px;transform:scaleX(.96)">Amministratore</div>
<div class="t" style="left:599px;top:349.99px;transform:scaleX(.96)">Part-time verticale 30/36</div>
<div class="t" style="left:740px;top:349.99px;transform:scaleX(.96)">8</div>
<div class="a" style="left:457px;top:379.66px;width:421px;height:1px;background:#c4c4c4"></div>
<div class="t" style="left:459px;top:365.66px;transform:scaleX(.96)">Collaboratore coordinato c...</div>
<div class="t" style="left:599px;top:365.66px;transform:scaleX(.96)">Full Time</div>
<div class="t" style="left:740px;top:365.66px;transform:scaleX(.96)">1</div>
<div class="a" style="left:457px;top:395.33px;width:421px;height:1px;background:#c4c4c4"></div>
<div class="t" style="left:459px;top:381.33px;transform:scaleX(.96)">Collaboratore coordinato c...</div>
<div class="t" style="left:599px;top:381.33px;transform:scaleX(.96)">Part-time orizzontale 18/36</div>
<div class="t" style="left:740px;top:381.33px;transform:scaleX(.96)">8</div>
<div class="a" style="left:457px;top:411.00px;width:421px;height:1px;background:#c4c4c4"></div>
<div class="t" style="left:459px;top:397.00px;transform:scaleX(.96)">Collaboratore coordinato c...</div>
<div class="t" style="left:599px;top:397.00px;transform:scaleX(.96)">Part-time orizzontale 24/36</div>
<div class="t" style="left:740px;top:397.00px;transform:scaleX(.96)">8</div>
<div class="a" style="left:457px;top:426.67px;width:421px;height:1px;background:#c4c4c4"></div>
<div class="t" style="left:459px;top:412.67px;transform:scaleX(.96)">Collaboratore coordinato c...</div>
<div class="t" style="left:599px;top:412.67px;transform:scaleX(.96)">Part-time orizzontale 30/36</div>
<div class="t" style="left:740px;top:412.67px;transform:scaleX(.96)">8</div>
<div class="a" style="left:457px;top:442.34px;width:421px;height:1px;background:#c4c4c4"></div>
<div class="t" style="left:459px;top:428.34px;transform:scaleX(.96)">Collaboratore coordinato c...</div>
<div class="t" style="left:599px;top:428.34px;transform:scaleX(.96)">Part-time verticale 100</div>
<div class="t" style="left:740px;top:428.34px;transform:scaleX(.96)">1</div>
<div class="a" style="left:457px;top:458.01px;width:421px;height:1px;background:#c4c4c4"></div>
<div class="t" style="left:459px;top:444.01px;transform:scaleX(.96)">Collaboratore coordinato c...</div>
<div class="t" style="left:599px;top:444.01px;transform:scaleX(.96)">Part-time verticale 18/36</div>
<div class="t" style="left:740px;top:444.01px;transform:scaleX(.96)">8</div>
<div class="a" style="left:457px;top:473.68px;width:421px;height:1px;background:#c4c4c4"></div>
<div class="t" style="left:459px;top:459.68px;transform:scaleX(.96)">Collaboratore coordinato c...</div>
<div class="t" style="left:599px;top:459.68px;transform:scaleX(.96)">Part-time verticale 24/36</div>
<div class="t" style="left:740px;top:459.68px;transform:scaleX(.96)">8</div>
<div class="a" style="left:457px;top:489.35px;width:421px;height:1px;background:#c4c4c4"></div>
<div class="t" style="left:459px;top:475.35px;transform:scaleX(.96)">Collaboratore coordinato c...</div>
<div class="t" style="left:599px;top:475.35px;transform:scaleX(.96)">Part-time verticale 30/36</div>
<div class="t" style="left:740px;top:475.35px;transform:scaleX(.96)">8</div>
<div class="a" style="left:457px;top:505.02px;width:421px;height:1px;background:#c4c4c4"></div>
<div class="t" style="left:459px;top:491.02px;transform:scaleX(.96)">City Manager</div>
<div class="t" style="left:599px;top:491.02px;transform:scaleX(.96)">Full Time</div>
<div class="t" style="left:740px;top:491.02px;transform:scaleX(.96)">1</div>
<div class="a" style="left:457px;top:520.69px;width:421px;height:1px;background:#c4c4c4"></div>
<div class="t" style="left:459px;top:506.69px;transform:scaleX(.96)">City Manager</div>
<div class="t" style="left:599px;top:506.69px;transform:scaleX(.96)">Part-time orizzontale 18/36</div>
<div class="t" style="left:740px;top:506.69px;transform:scaleX(.96)">8</div>
<div class="a" style="left:457px;top:536.36px;width:421px;height:1px;background:#c4c4c4"></div>
<div class="t" style="left:459px;top:522.36px;transform:scaleX(.96)">City Manager</div>
<div class="t" style="left:599px;top:522.36px;transform:scaleX(.96)">Part-time orizzontale 24/36</div>
<div class="t" style="left:740px;top:522.36px;transform:scaleX(.96)">8</div>
<div class="a" style="left:457px;top:552.03px;width:421px;height:1px;background:#c4c4c4"></div>
<div class="t" style="left:459px;top:538.03px;transform:scaleX(.96)">City Manager</div>
<div class="t" style="left:599px;top:538.03px;transform:scaleX(.96)">Part-time orizzontale 30/36</div>
<div class="t" style="left:740px;top:538.03px;transform:scaleX(.96)">8</div>
<div class="a" style="left:457px;top:567.70px;width:421px;height:1px;background:#c4c4c4"></div>
<div class="t" style="left:459px;top:553.70px;transform:scaleX(.96)">City Manager</div>
<div class="t" style="left:599px;top:553.70px;transform:scaleX(.96)">Part-time verticale 100</div>
<div class="t" style="left:740px;top:553.70px;transform:scaleX(.96)">1</div>
<div class="a" style="left:596.3px;top:238px;width:1px;height:332px;background:#c4c4c4"></div>
<div class="a" style="left:737.6px;top:238px;width:1px;height:332px;background:#c4c4c4"></div>
<div class="a" style="left:878px;top:238px;width:15px;height:333px;background:linear-gradient(90deg,#fafafa,#e4e4e4);border-left:1px solid #c4c4c4"></div>
<div class="a" style="left:878.5px;top:239.5px;width:15px;height:14.5px;border:1px solid #6a6a6a;background:linear-gradient(#fff,#e8e8e8)"></div>
<svg class="a" style="left:882px;top:244.5px" width="8" height="4.5"><path d="M0 4.5 H8 L4 0 Z" fill="#3a3a3a"/></svg>
<div class="a" style="left:878.5px;top:253.7px;width:15px;height:52px;border:1px solid #4d617e;background:linear-gradient(90deg,#bcdefb,#98c8f5 45%,#86c2f6 75%,#7cc4fa)"></div>
<div class="a" style="left:882px;top:274px;width:8px;height:1px;background:#7ea6d2"></div>
<div class="a" style="left:882px;top:277px;width:8px;height:1px;background:#7ea6d2"></div>
<div class="a" style="left:882px;top:280px;width:8px;height:1px;background:#7ea6d2"></div>
<div class="a" style="left:882px;top:283px;width:8px;height:1px;background:#7ea6d2"></div>
<div class="a" style="left:878.5px;top:555.5px;width:15px;height:14px;border:1px solid #6a6a6a;background:linear-gradient(#fff,#e8e8e8)"></div>
<svg class="a" style="left:882px;top:560.5px" width="8" height="4.5"><path d="M0 0 H8 L4 4.5 Z" fill="#3a3a3a"/></svg>
<div class="a" style="left:3px;top:577.5px;width:896px;height:17.5px;background:linear-gradient(#f4f5f6,#f1f2f3);border-left:1px solid #6a6a6a"></div>
<div class="a" style="left:3px;top:595px;width:896px;height:1px;background:#eefcff"></div>
</body></html>
